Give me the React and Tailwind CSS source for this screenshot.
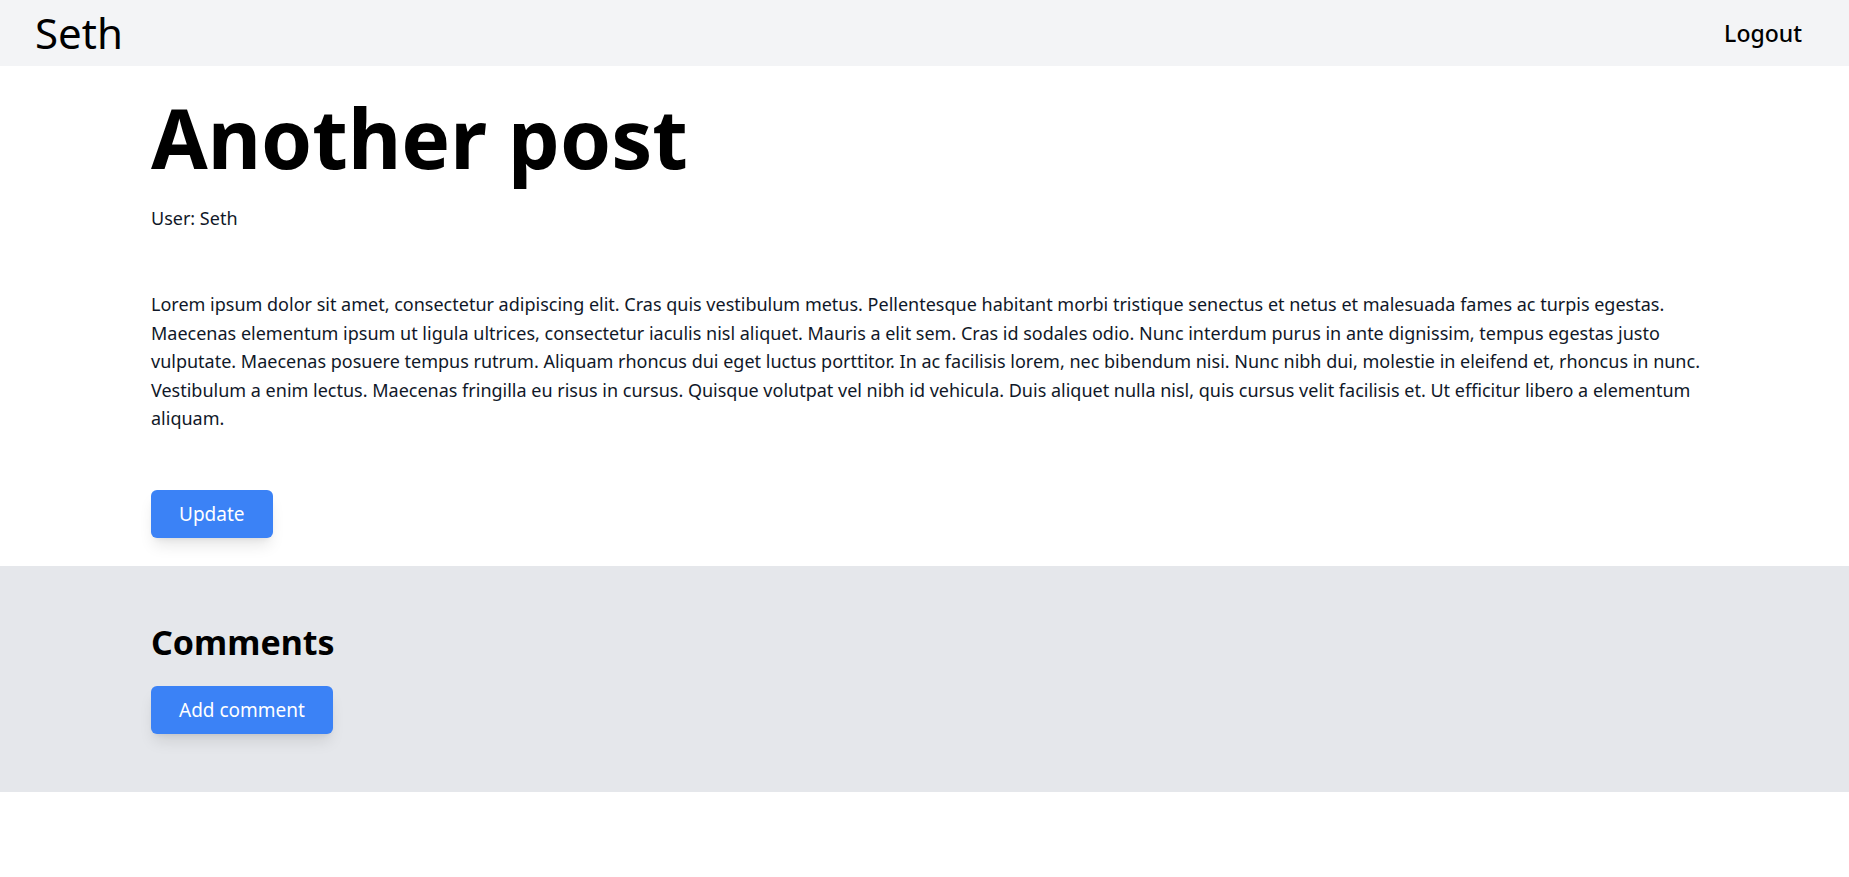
import React from "react";

const LOREM =
  "Lorem ipsum dolor sit amet, consectetur adipiscing elit. Cras quis vestibulum metus. Pellentesque habitant morbi tristique senectus et netus et malesuada fames ac turpis egestas. Maecenas elementum ipsum ut ligula ultrices, consectetur iaculis nisl aliquet. Mauris a elit sem. Cras id sodales odio. Nunc interdum purus in ante dignissim, tempus egestas justo vulputate. Maecenas posuere tempus rutrum. Aliquam rhoncus dui eget luctus porttitor. In ac facilisis lorem, nec bibendum nisi. Nunc nibh dui, molestie in eleifend et, rhoncus in nunc. Vestibulum a enim lectus. Maecenas fringilla eu risus in cursus. Quisque volutpat vel nibh id vehicula. Duis aliquet nulla nisl, quis cursus velit facilisis et. Ut efficitur libero a elementum aliquam.";

const Navbar = () => (
  <nav className="flex h-[66px] items-center justify-between bg-[#f3f4f6] pl-[35px] pr-[47px]">
    <a href="#" className="text-[42px] leading-none text-black">
      Seth
    </a>
    <button className="text-[23px] font-medium leading-none text-black">
      Logout
    </button>
  </nav>
);

const Post = () => (
  <main className="pl-[151px] pr-[140px] pt-[30px]">
    <h1 className="text-[82px] font-bold leading-none text-black">
      Another post
    </h1>
    <p className="mt-[26px] text-lg leading-7 text-gray-900">User: Seth</p>
    <p className="mt-[58px] text-lg leading-[28.5px] text-gray-900">{LOREM}</p>
    <button className="mb-7 mt-[57px] rounded-md bg-[#3b82f6] px-7 py-2.5 text-[19px] leading-7 text-white shadow-lg">
      Update
    </button>
  </main>
);

const Comments = () => (
  <section className="bg-[#e5e7eb]">
    <div className="pb-[58px] pl-[151px] pr-[140px] pt-14">
      <h2 className="text-[34px] font-bold leading-10 text-black">Comments</h2>
      <button className="mt-6 rounded-md bg-[#3b82f6] px-7 py-2.5 text-[19px] leading-7 text-white shadow-lg">
        Add comment
      </button>
    </div>
  </section>
);

export default function App() {
  return (
    <div className="min-h-screen bg-white font-['Noto_Sans',sans-serif]">
      <Navbar />
      <Post />
      <Comments />
    </div>
  );
}
